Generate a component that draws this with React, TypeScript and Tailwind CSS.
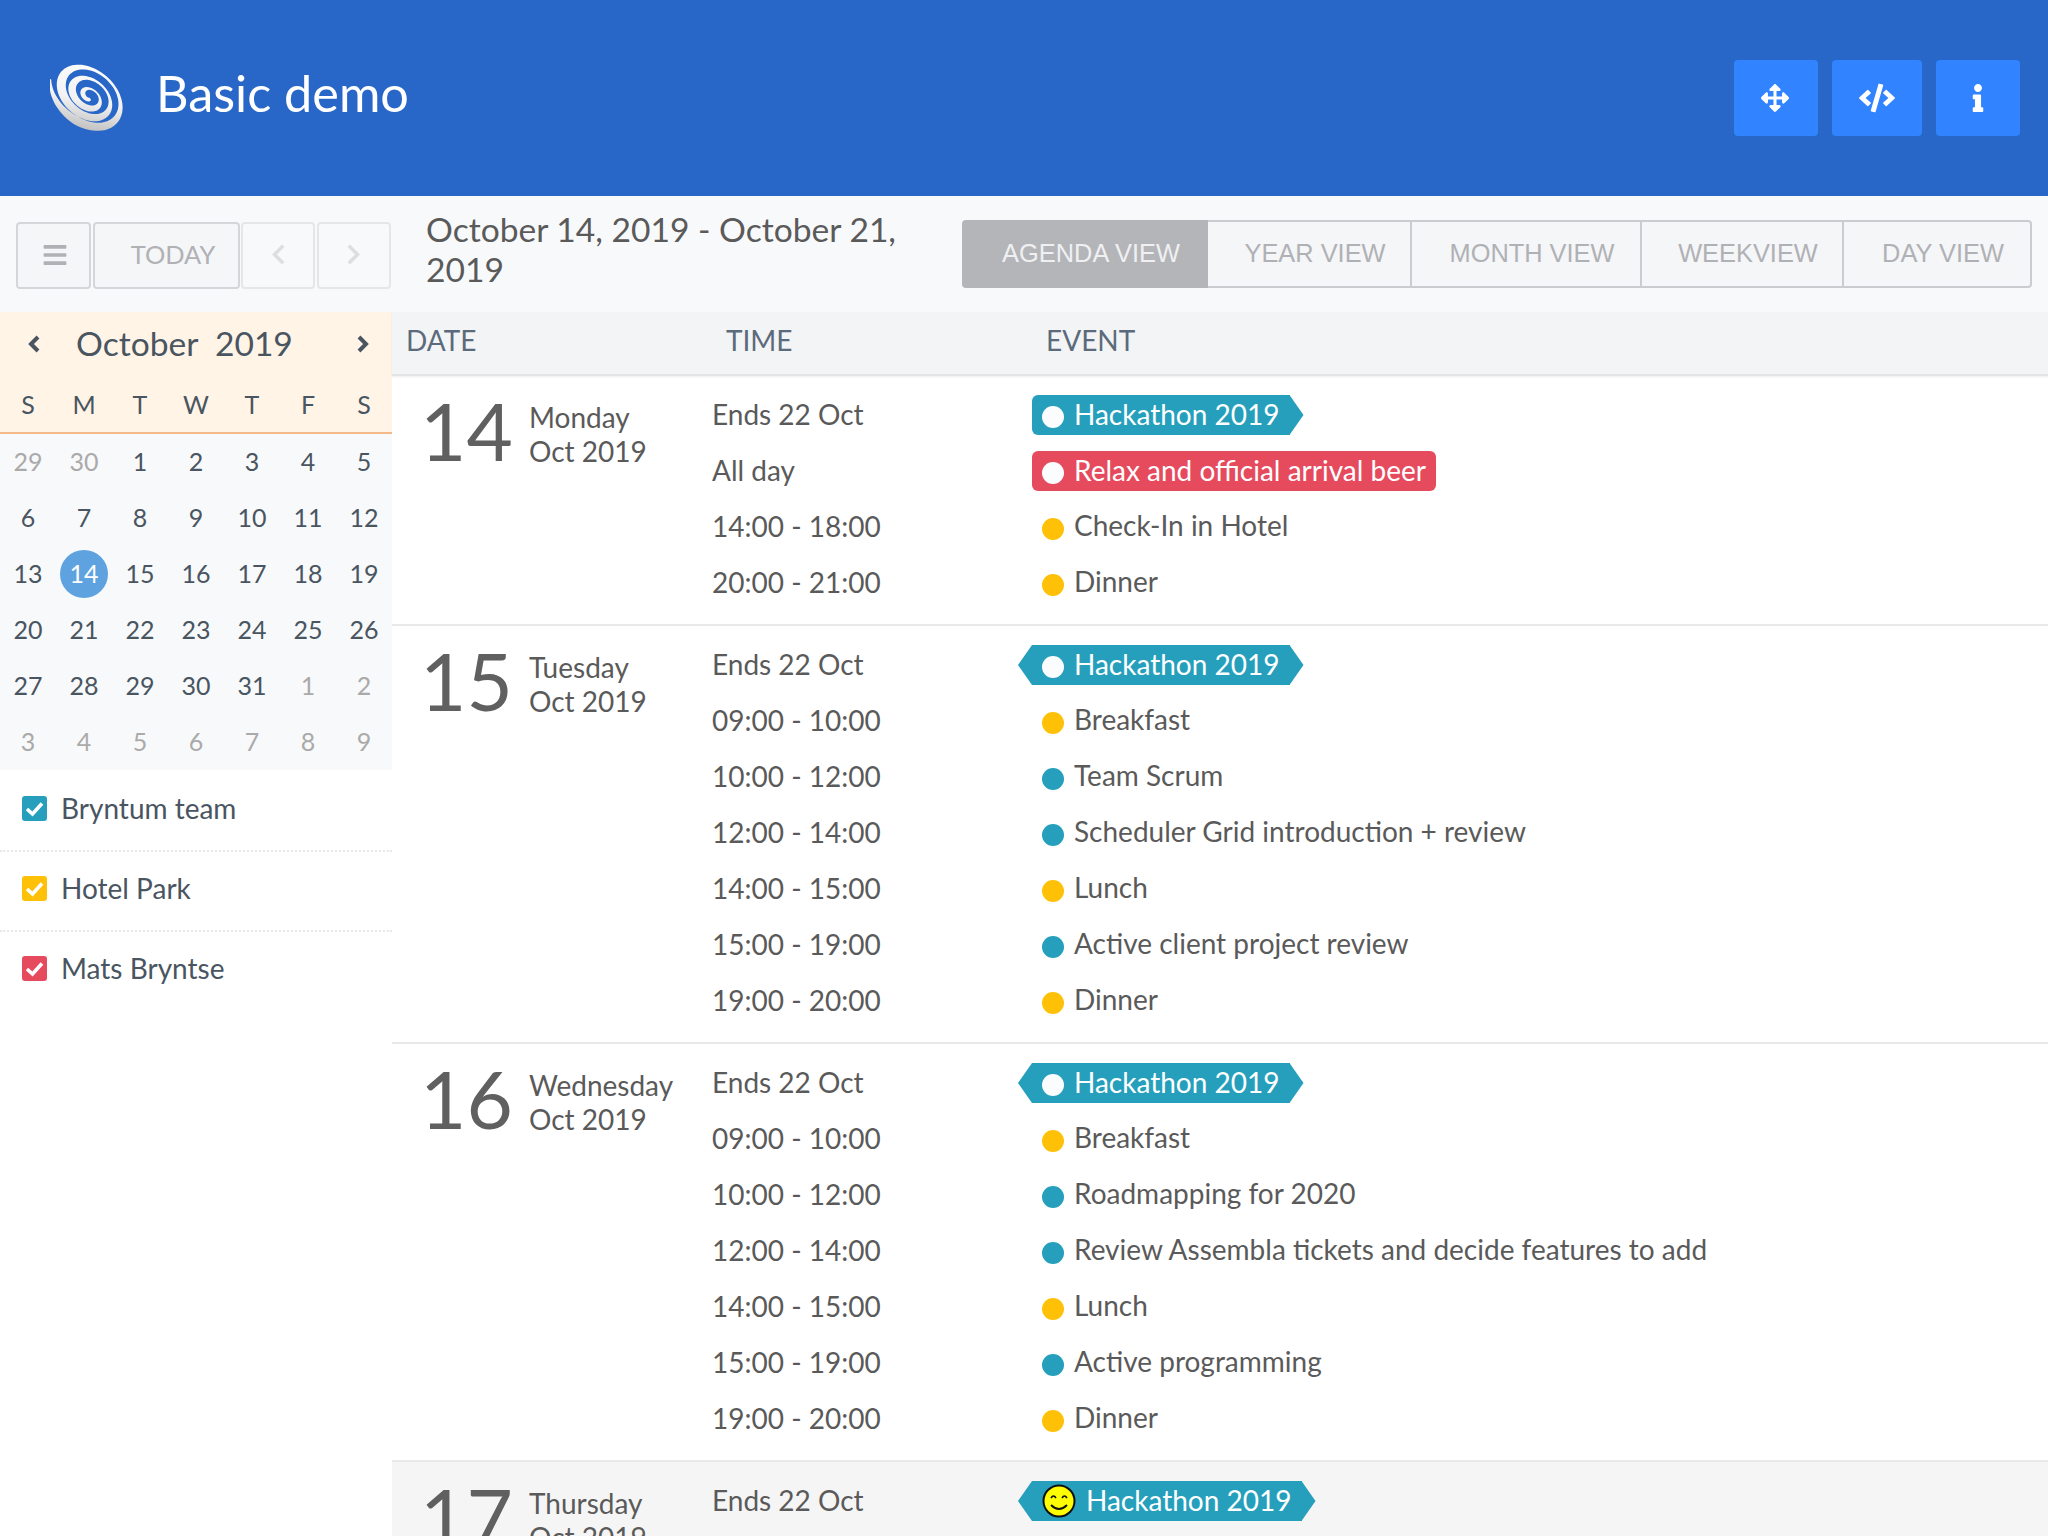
import { FaArrowsAlt, FaBars, FaCode, FaInfo } from "react-icons/fa";

type Kind = "team" | "hotel" | "mats";
type Ev = { time: string; title: string; kind: Kind; badge?: boolean; left?: boolean; right?: boolean; smile?: boolean };

const hack = (left: boolean, smile = false): Ev => ({
  time: "Ends 22 Oct", title: "Hackathon 2019", kind: "team", badge: true, left, right: true, smile,
});

const DAYS: { num: number; day: string; month: string; events: Ev[]; shaded?: boolean }[] = [
  {
    num: 14, day: "Monday", month: "Oct 2019",
    events: [
      hack(false),
      { time: "All day", title: "Relax and official arrival beer", kind: "mats", badge: true },
      { time: "14:00 - 18:00", title: "Check-In in Hotel", kind: "hotel" },
      { time: "20:00 - 21:00", title: "Dinner", kind: "hotel" },
    ],
  },
  {
    num: 15, day: "Tuesday", month: "Oct 2019",
    events: [
      hack(true),
      { time: "09:00 - 10:00", title: "Breakfast", kind: "hotel" },
      { time: "10:00 - 12:00", title: "Team Scrum", kind: "team" },
      { time: "12:00 - 14:00", title: "Scheduler Grid introduction + review", kind: "team" },
      { time: "14:00 - 15:00", title: "Lunch", kind: "hotel" },
      { time: "15:00 - 19:00", title: "Active client project review", kind: "team" },
      { time: "19:00 - 20:00", title: "Dinner", kind: "hotel" },
    ],
  },
  {
    num: 16, day: "Wednesday", month: "Oct 2019",
    events: [
      hack(true),
      { time: "09:00 - 10:00", title: "Breakfast", kind: "hotel" },
      { time: "10:00 - 12:00", title: "Roadmapping for 2020", kind: "team" },
      { time: "12:00 - 14:00", title: "Review Assembla tickets and decide features to add", kind: "team" },
      { time: "14:00 - 15:00", title: "Lunch", kind: "hotel" },
      { time: "15:00 - 19:00", title: "Active programming", kind: "team" },
      { time: "19:00 - 20:00", title: "Dinner", kind: "hotel" },
    ],
  },
  { num: 17, day: "Thursday", month: "Oct 2019", shaded: true, events: [hack(true, true)] },
];

const CAL: number[][] = [
  [29, 30, 1, 2, 3, 4, 5],
  [6, 7, 8, 9, 10, 11, 12],
  [13, 14, 15, 16, 17, 18, 19],
  [20, 21, 22, 23, 24, 25, 26],
  [27, 28, 29, 30, 31, 1, 2],
  [3, 4, 5, 6, 7, 8, 9],
];

// spiral band, thicker on one side so it reads like the logo's crescents
function spiralPath() {
  const outer: string[] = [];
  const inner: string[] = [];
  const turns = 3.35;
  const n = 260;
  for (let i = 0; i <= n; i++) {
    const t = i / n;
    const a = t * turns * Math.PI * 2 + 0.5;
    const r = 3 + t * 44;
    const w = (1 + 3.5 * t ** 0.4) * (1 + 0.55 * Math.cos(a - 1.9)) * Math.min(1, (1 - t) * 14 + 0.15);
    const cx = 50 + (1 - t) * 3;
    const cy = 50 + (1 - t) * 2;
    outer.push(`${(cx + (r + w) * Math.cos(a)).toFixed(2)} ${(cy + (r + w) * Math.sin(a)).toFixed(2)}`);
    inner.unshift(`${(cx + (r - w) * Math.cos(a)).toFixed(2)} ${(cy + (r - w) * Math.sin(a)).toFixed(2)}`);
  }
  return `M${outer.join("L")}L${inner.join("L")}Z`;
}

function Logo() {
  return (
    <svg width="76" height="76" viewBox="0 0 76 76" className="-mt-[6px] ml-[2px] shrink-0">
      <defs>
        <linearGradient id="lg" x1="0" y1="0" x2="0.75" y2="1">
          <stop offset="0" stopColor="#ffffff" />
          <stop offset="0.6" stopColor="#f2f2f2" />
          <stop offset="1" stopColor="#bcbcbc" />
        </linearGradient>
      </defs>
      <g transform="translate(38 37) rotate(40) scale(0.9 0.64) translate(-50 -50)">
        <path d={spiralPath()} fill="url(#lg)" />
      </g>
    </svg>
  );
}

function Smiley() {
  return (
    <svg width="34" height="34" viewBox="0 0 34 34" className="shrink-0">
      <circle cx="17" cy="17" r="15.5" fill="#ffff00" stroke="#111" strokeWidth="2" />
      <path d="M9 14 q2.5 -4 5 0 M20 14 q2.5 -4 5 0" fill="none" stroke="#111" strokeWidth="1.6" />
      <path d="M9 21 q8 8 16 0" fill="none" stroke="#111" strokeWidth="1.8" />
    </svg>
  );
}

function Chevron({ dir, w, h, sw, cls }: { dir: "l" | "r"; w: number; h: number; sw: number; cls?: string }) {
  const pts = dir === "l" ? `${w - sw / 2},${sw / 2} ${sw},${h / 2} ${w - sw / 2},${h - sw / 2}` : `${sw / 2},${sw / 2} ${w - sw},${h / 2} ${sw / 2},${h - sw / 2}`;
  return (
    <svg width={w} height={h} viewBox={`0 0 ${w} ${h}`} className={cls}>
      <polyline points={pts} fill="none" stroke="currentColor" strokeWidth={sw} />
    </svg>
  );
}

function Tick() {
  return (
    <svg width="25" height="25" viewBox="0 0 25 25">
      <polyline points="5,13 10.5,18 20,7.5" fill="none" stroke="#fff" strokeWidth="3.6" />
    </svg>
  );
}

function EventLine({ ev }: { ev: Ev }) {
  const dot = ev.kind === "team" ? "bg-[#259fbc]" : ev.kind === "hotel" ? "bg-[#ffc107]" : "bg-[#e64a5d]";
  const body = ev.kind === "team" ? "bg-[#259fbc]" : "bg-[#e64a5d]";

  if (!ev.badge) {
    return (
      <div className="flex h-14 items-center pl-[10px]">
        <span className={`mt-[3px] h-[22px] w-[22px] shrink-0 rounded-full ${dot}`} />
        <span className="ml-[10px] -mt-[4px] text-[28px] leading-10 text-[#5a5a5a]">{ev.title}</span>
      </div>
    );
  }

  return (
    <div className="flex h-14 items-center">
      <div className="relative flex h-10 items-center">
        {ev.left && (
          <span className={`absolute -left-[14px] top-0 h-10 w-[14px] [clip-path:polygon(100%_0,100%_100%,0_50%)] ${body}`} />
        )}
        <div className={`flex h-10 items-center pr-[10px] pl-[10px] ${body} ${ev.left ? "" : "rounded-l-md"} ${ev.right ? "" : "rounded-r-md"}`}>
          {ev.smile ? <Smiley /> : <span className="mt-[3px] h-[22px] w-[22px] shrink-0 rounded-full bg-[#fbfcfd]" />}
          <span className="ml-[10px] -mt-[3px] text-[28px] leading-10 text-white">{ev.title}</span>
        </div>
        {ev.right && (
          <span className={`h-10 w-[14px] [clip-path:polygon(0_0,100%_50%,0_100%)] ${body}`} />
        )}
      </div>
    </div>
  );
}

function Sidebar() {
  return (
    <aside className="w-[392px] shrink-0">
      <div className="h-[122px] border-b-2 border-[#f5b888] bg-[#fff4e6] text-[#495561]">
        <div className="flex h-16 items-center pr-[22px] pl-[27px]">
          <Chevron dir="l" w={13} h={18} sw={4} />
          <span className="ml-[36px] text-[33.6px] leading-none whitespace-pre">October  2019</span>
          <Chevron dir="r" w={13} h={18} sw={4} cls="ml-auto" />
        </div>
        <div className="grid grid-cols-7 text-center text-[25px] leading-[56px]">
          {["S", "M", "T", "W", "T", "F", "S"].map((d, i) => (
            <span key={i}>{d}</span>
          ))}
        </div>
      </div>
      <div className="h-[336px] bg-[#f8f9fa]">
        {CAL.map((week, r) => (
          <div key={r} className="grid h-14 grid-cols-7 text-center text-[25px]">
            {week.map((d, c) => {
              const muted = (r === 0 && d > 20) || (r >= 4 && d < 10);
              const today = d === 14;
              return (
                <div key={c} className="flex items-center justify-center">
                  <span className={`flex h-12 w-12 items-center justify-center rounded-full ${today ? "bg-[#5ea3e0] text-white" : muted ? "text-[#aaaaaa]" : "text-[#495561]"}`}>
                    {d}
                  </span>
                </div>
              );
            })}
          </div>
        ))}
      </div>
      <div className="pt-[2px]">
        {[
          { label: "Bryntum team", cls: "bg-[#259fbc]" },
          { label: "Hotel Park", cls: "bg-[#ffc107]" },
          { label: "Mats Bryntse", cls: "bg-[#e64a5d]" },
        ].map((f, i) => (
          <div key={f.label} className={`flex h-20 items-center border-b-2 pb-[6px] pl-[22px] ${i < 2 ? "border-dotted border-[#e8e8e8]" : "border-transparent"}`}>
            <span className={`flex h-[25px] w-[25px] items-center justify-center rounded-[3px] ${f.cls}`}>
              <Tick />
            </span>
            <span className="ml-[14px] text-[28px] text-[#495561]">{f.label}</span>
          </div>
        ))}
      </div>
    </aside>
  );
}

function Agenda() {
  return (
    <main className="min-w-0 flex-1">
      <div className="grid h-16 grid-cols-[320px_320px_1fr] items-center border-b-2 border-[#e4e4e4] bg-[#f3f4f6] pl-[14px] text-[28px] text-[#5b6b7b] shadow-[0_1px_2px_rgba(0,0,0,0.08)]">
        <span className="-mt-[6px]">DATE</span>
        <span className="-mt-[6px]">TIME</span>
        <span className="-mt-[6px]">EVENT</span>
      </div>
      {DAYS.map((d) => (
        <div key={d.num} className={`grid grid-cols-[320px_320px_1fr] border-b-2 border-[#e9e9e9] pt-[11px] pb-[13px] ${d.shaded ? "bg-[#f5f5f5]" : ""}`}>
          <div className="flex pl-[28px] text-[#5a5a5a]">
            <span className="-mt-[7px] w-[109px] shrink-0 text-[80px] leading-[100px] text-[#606060]">{d.num}</span>
            <div className="mt-[13px] text-[28px] leading-[34px]">
              <div>{d.day}</div>
              <div>{d.month}</div>
            </div>
          </div>
          <div className="-mt-[1px]">
            {d.events.map((e, i) => (
              <div key={i} className="h-14 text-[28px] leading-14 text-[#5a5a5a]">{e.time}</div>
            ))}
          </div>
          <div>
            {d.events.map((e, i) => (
              <EventLine key={i} ev={e} />
            ))}
          </div>
        </div>
      ))}
    </main>
  );
}

export default function App() {
  const views = ["AGENDA VIEW", "YEAR VIEW", "MONTH VIEW", "WEEKVIEW", "DAY VIEW"];
  const widths = ["w-[246px]", "w-[204px]", "w-[230px]", "w-[202px]", "w-[188px]"];
  return (
    <div className="h-[1536px] w-[2048px] overflow-hidden bg-white font-['Lato','Noto_Sans',sans-serif]">
      <header className="flex h-[196px] items-center bg-[#2867c8] pr-[28px] pl-[48px]">
        <Logo />
        <h1 className="ml-[30px] -mt-[10px] flex-1 text-[50.4px] font-normal text-white">Basic demo</h1>
        <div className="flex gap-[14px]">
          <button className="flex h-[76px] w-[84px] items-center justify-center rounded-[4px] bg-[#3183ff] pr-[2px] text-[28px] text-white"><FaArrowsAlt /></button>
          <button className="flex h-[76px] w-[90px] items-center justify-center rounded-[4px] bg-[#3183ff] text-[36px] text-white"><FaCode /></button>
          <button className="flex h-[76px] w-[84px] items-center justify-center rounded-[4px] bg-[#3183ff] text-[28px] text-white"><FaInfo /></button>
        </div>
      </header>

      <div className="flex h-[116px] items-center bg-[#f8f9fa] pr-[16px] pl-[16px]">
        <div className="mt-[3px] flex">
          <button className="flex h-[67px] w-[75px] items-center justify-center rounded-[4px] border-2 border-[#d5d6d9] bg-[#f5f6f8] pb-[2px] pl-[2px] text-[26px] text-[#b0b1b5]"><FaBars /></button>
          <button className="ml-[2px] flex h-[67px] w-[147px] items-center justify-center rounded-[4px] border-2 border-[#d5d6d9] bg-[#f5f6f8] pb-[2px] pl-[13px] text-[25.4px] text-[#b0b1b5]">TODAY</button>
          <button className="ml-[1px] flex h-[67px] w-[74px] items-center justify-center rounded-[4px] border-2 border-[#e5e6e8] bg-[#f8f9fa] pb-[2px] text-[#dddee0]"><Chevron dir="l" w={14} h={21} sw={3.5} /></button>
          <button className="ml-[2px] flex h-[67px] w-[74px] items-center justify-center rounded-[4px] border-2 border-[#e5e6e8] bg-[#f8f9fa] pb-[2px] text-[#dddee0]"><Chevron dir="r" w={14} h={21} sw={3.5} /></button>
        </div>
        <div className="ml-[35px] -mt-[10px] w-[510px] text-[33.6px] leading-[40px] text-[#5a5a5a]">October 14, 2019 - October 21, 2019</div>
        <div className="ml-auto flex h-[68px]">
          {views.map((v, i) => (
            <button
              key={v}
              className={`flex items-center justify-center border-y-2 border-r-2 pb-[2px] pl-3 font-['Liberation_Sans',sans-serif] text-[25.4px] ${widths[i]} ${i === 0 ? "rounded-l-[4px] border-l-2 border-[#b4b5b9] bg-[#b4b5b9] text-[#f0f0f2]" : "border-[#cbccd0] bg-[#f5f6f8] text-[#b0b1b5]"} ${i === 4 ? "rounded-r-[4px]" : ""}`}
            >
              {v}
            </button>
          ))}
        </div>
      </div>

      <div className="flex">
        <Sidebar />
        <Agenda />
      </div>
    </div>
  );
}
